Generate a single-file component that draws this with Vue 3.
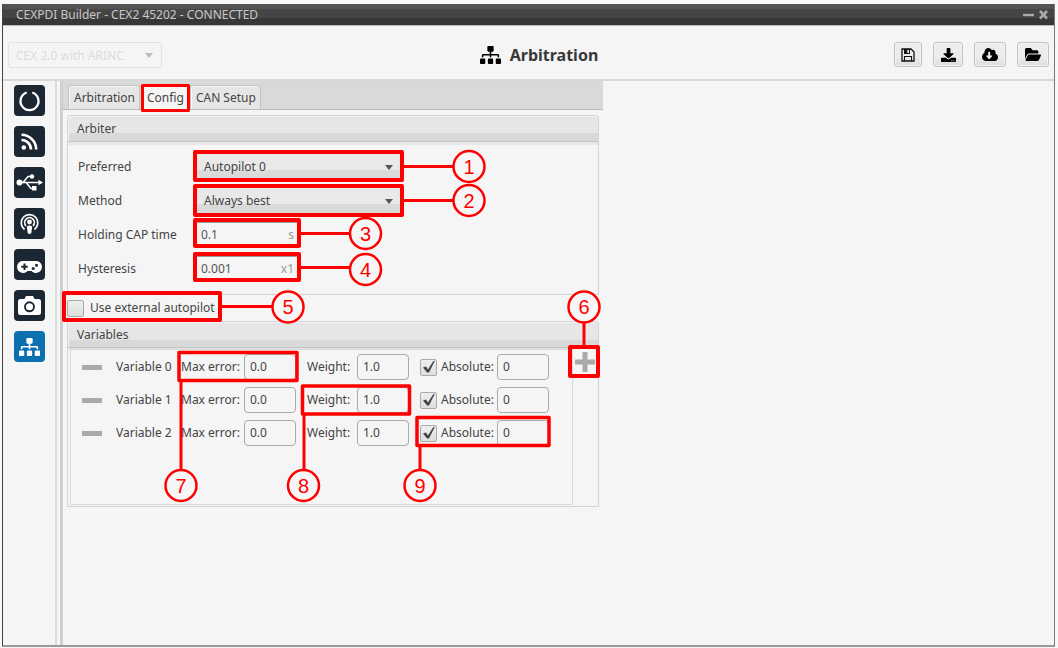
<script setup>
import { ref } from 'vue'

const sitemap =
  'M128 352H32c-17.67 0-32 14.33-32 32v96c0 17.67 14.33 32 32 32h96c17.67 0 32-14.33 32-32v-96c0-17.67-14.33-32-32-32zm-24-80h192v48h48v-48h192v48h48v-57.59c0-21.17-17.23-38.41-38.41-38.41H344v-64h40c17.67 0 32-14.33 32-32V32c0-17.67-14.33-32-32-32H256c-17.67 0-32 14.33-32 32v96c0 17.67 14.33 32 32 32h40v64H94.41C73.23 224 56 241.23 56 262.41V320h48v-48zm264 80h-96c-17.67 0-32 14.33-32 32v96c0 17.67 14.33 32 32 32h96c17.67 0 32-14.33 32-32v-96c0-17.67-14.33-32-32-32zm240 0h-96c-17.67 0-32 14.33-32 32v96c0 17.67 14.33 32 32 32h96c17.67 0 32-14.33 32-32v-96c0-17.67-14.33-32-32-32z'

const preferred = ref('Autopilot 0')
const method = ref('Always best')
const holdingTime = ref('0.1')
const hysteresis = ref('0.001')
const external = ref(false)
const variables = ref([
  { name: 'Variable 0', error: '0.0', weight: '1.0', absolute: true, value: '0' },
  { name: 'Variable 1', error: '0.0', weight: '1.0', absolute: true, value: '0' },
  { name: 'Variable 2', error: '0.0', weight: '1.0', absolute: true, value: '0' },
])

// Callouts: highlighted box, leader line and numbered circle
const boxes = [
  { x: 142.5, y: 85.5, w: 46, h: 25, s: 3 },
  { x: 195, y: 152, w: 207, h: 28, s: 4 },
  { x: 195, y: 186, w: 207, h: 29, s: 4 },
  { x: 195, y: 220, w: 104, h: 26, s: 4 },
  { x: 195, y: 254, w: 104, h: 26, s: 4 },
  { x: 64, y: 293, w: 156, h: 27, s: 4 },
  { x: 570, y: 347, w: 28, h: 29, s: 4 },
  { x: 179, y: 352.5, w: 118, h: 28, s: 3.5 },
  { x: 302.5, y: 386, w: 107, h: 28, s: 3.5 },
  { x: 417, y: 417.5, w: 132, h: 28, s: 3.5 },
]
const callouts = [
  { n: 1, x: 469, y: 166.5, line: 'M403 166.5H454' },
  { n: 2, x: 469, y: 200.5, line: 'M403 200.5H454' },
  { n: 3, x: 365.5, y: 233.5, line: 'M300 233.5H350' },
  { n: 4, x: 365.5, y: 269.5, line: 'M300 267.5H350' },
  { n: 5, x: 288, y: 307, line: 'M221 306.5H272' },
  { n: 6, x: 584, y: 307, line: 'M584 322V346' },
  { n: 7, x: 181, y: 485.5, line: 'M181 381V470' },
  { n: 8, x: 303.5, y: 485.5, line: 'M304 415V470' },
  { n: 9, x: 420, y: 485.5, line: 'M420 446V470' },
]
</script>

<template>
  <div class="desktop">
    <div class="window">
      <header class="titlebar">
        <span class="caption">CEXPDI Builder - CEX2 45202 - CONNECTED</span>
        <button class="win-btn" aria-label="Minimize">
          <svg width="11" height="13" viewBox="0 0 11 13"><path d="M0 7H11" stroke="#aaa" stroke-width="2.4" /></svg>
        </button>
        <button class="win-btn" aria-label="Close">
          <svg width="9" height="13" viewBox="0 0 9 13"><path d="M1 3L8 10.500M8 3L1 10.500" stroke="#aaa" stroke-width="2.6" /></svg>
        </button>
      </header>

      <div class="toolbar">
        <div class="select-wrap device">
          <select aria-label="Device" disabled><option>CEX 2.0 with ARINC</option></select>
          <svg class="arrow" width="8" height="5" viewBox="0 0 8 5"><path d="M0 0H8L4 5Z" /></svg>
        </div>
        <h1>
          <svg width="21" height="18" viewBox="0 0 640 512" preserveAspectRatio="none"><path :d="sitemap" /></svg>
          Arbitration
        </h1>
        <div class="actions">
          <button class="narrow" aria-label="Save">
            <svg width="14" height="14" viewBox="0 0 14 14" fill="none" stroke="#111">
              <path d="M1 1H10L13 4V13H1Z" stroke-width="1.3" />
              <path d="M3 1H9V6H3Z" fill="#111" stroke="none" /><path d="M6.300 2H8V5H6.300Z" fill="#eee" stroke="none" />
              <path d="M3.500 13V8.500H10.500V13" stroke-width="1.1" />
            </svg>
          </button>
          <button class="medium" aria-label="Download">
            <svg width="15" height="14" viewBox="0 0 512 512" preserveAspectRatio="none"><path d="M216 0h80c13.3 0 24 10.7 24 24v168h87.7c17.8 0 26.7 21.5 14.1 34.1L269.7 378.3c-7.5 7.5-19.8 7.5-27.3 0L90.1 226.1c-12.6-12.6-3.7-34.1 14.1-34.1H192V24c0-13.3 10.7-24 24-24zm296 376v112c0 13.3-10.7 24-24 24H24c-13.3 0-24-10.7-24-24V376c0-13.3 10.7-24 24-24h146.7l49 49c20.1 20.1 52.5 20.1 72.6 0l49-49H488c13.3 0 24 10.7 24 24zm-124 88c0-11-9-20-20-20s-20 9-20 20 9 20 20 20 20-9 20-20zm64 0c0-11-9-20-20-20s-20 9-20 20 9 20 20 20 20-9 20-20z" /></svg>
          </button>
          <button aria-label="Download from cloud">
            <svg width="16" height="13" viewBox="0 32 640 448" preserveAspectRatio="none"><path d="M537.6 226.6c4.1-10.7 6.4-22.4 6.4-34.6 0-53-43-96-96-96-19.7 0-38.1 6-53.3 16.2C367 64.2 315.3 32 256 32c-88.4 0-160 71.6-160 160 0 2.7.1 5.4.2 8.1C40.2 219.8 0 273.2 0 336c0 79.5 64.5 144 144 144h368c70.7 0 128-57.3 128-128 0-61.9-44-113.6-102.4-125.4zm-132.9 88.7L299.300 420.700c-6.2 6.2-16.4 6.2-22.6 0L171.300 315.300c-10.1-10.1-2.9-27.3 11.3-27.3H248V176c0-8.8 7.2-16 16-16h48c8.8 0 16 7.2 16 16v112h65.4c14.2 0 21.4 17.2 11.3 27.3z" /></svg>
          </button>
          <button aria-label="Open">
            <svg width="16" height="13" viewBox="0 64 576 384" preserveAspectRatio="none"><path d="M572.694 292.093L500.270 416.248A63.997 63.997 0 0 1 444.989 448H45.025c-18.523 0-30.064-20.093-20.731-36.093l72.424-124.155A64 64 0 0 1 152 256h399.964c18.523 0 30.064 20.093 20.730 36.093zM152 224h328v-48c0-26.510-21.490-48-48-48H272l-64-64H48C21.490 64 0 85.490 0 112v278.046l69.077-118.418C86.214 242.250 117.989 224 152 224z" /></svg>
          </button>
        </div>
      </div>

      <div class="content">
        <nav class="sidebar" aria-label="Sections">
          <button aria-label="Status">
            <svg viewBox="0 0 31 31"><path d="M12.700 7.500A9 9 0 1 0 18.300 7.500" fill="none" stroke="#fff" stroke-width="2.300" /></svg>
          </button>
          <button aria-label="Feeds">
            <svg viewBox="0 0 31 31" fill="none" stroke="#fff" stroke-width="2.600">
              <circle cx="9.800" cy="21.500" r="2.300" fill="#fff" stroke="none" />
              <path d="M7.500 14A9.500 9.500 0 0 1 17 23.500M7.500 8.800A14.700 14.700 0 0 1 22.200 23.500" />
            </svg>
          </button>
          <button aria-label="USB">
            <svg viewBox="0 0 31 31" fill="none" stroke="#fff" stroke-width="1.500">
              <path d="M4 15.500H26M9 15.500L14 9.500H17M12 15.500L17 21.500H19" />
              <circle cx="5.500" cy="15.500" r="3" fill="#fff" stroke="none" />
              <circle cx="18" cy="9.500" r="2.200" fill="#fff" stroke="none" />
              <path d="M18 19H22.500V23.500H18ZM24.500 12.700L29 15.500L24.500 18.300Z" fill="#fff" stroke="none" />
            </svg>
          </button>
          <button aria-label="Broadcast">
            <svg viewBox="0 0 31 31" fill="none" stroke="#fff" stroke-width="1.700">
              <path d="M10.500 21.500A8.300 8.300 0 1 1 20.500 21.500M12 17.800A4.800 4.800 0 1 1 19 17.800" />
              <circle cx="15.500" cy="14" r="2.400" fill="#fff" stroke="none" />
              <path d="M12.800 18.500Q15.500 16.500 18.200 18.500L17.300 25Q15.500 27 13.700 25Z" fill="#fff" stroke="none" />
            </svg>
          </button>
          <button aria-label="Gamepad">
            <svg viewBox="0 0 31 31">
              <path d="M10 12H21A6 6 0 1 1 17.500 22H13.500A6 6 0 1 1 10 12Z" fill="#fff" />
              <path d="M10.500 14.500V21M7.300 17.700H13.700" stroke="#1b2733" stroke-width="2" />
              <circle cx="19.200" cy="19.500" r="1.500" fill="#1b2733" /><circle cx="22.500" cy="16.300" r="1.500" fill="#1b2733" />
            </svg>
          </button>
          <button aria-label="Camera">
            <svg viewBox="0 0 31 31">
              <path d="M6.500 9H10.500L12 6H19L20.500 9H24.500Q27 9 27 11.500V22.500Q27 25 24.500 25H6.500Q4 25 4 22.500V11.500Q4 9 6.500 9Z" fill="#fff" />
              <circle cx="15.500" cy="16.800" r="4.500" fill="none" stroke="#1b2733" stroke-width="1.900" />
            </svg>
          </button>
          <button class="active" aria-label="Arbitration">
            <svg viewBox="0 0 31 31"><svg x="5" y="7" width="21" height="18" viewBox="0 0 640 512" preserveAspectRatio="none"><path :d="sitemap" fill="#fff" /></svg></svg>
          </button>
        </nav>
        <div class="splitter"></div>

        <main class="editor">
          <div class="tabs" role="tablist">
            <button role="tab" aria-selected="false">Arbitration</button>
            <button role="tab" class="selected" aria-selected="true">Config</button>
            <button role="tab" aria-selected="false">CAN Setup</button>
          </div>

          <div class="page">
            <section class="panel">
              <h2>Arbiter</h2>
              <div class="form">
                <label for="preferred">Preferred</label>
                <div class="select-wrap combo">
                  <select id="preferred" v-model="preferred"><option>Autopilot 0</option><option>Autopilot 1</option></select>
                  <svg class="arrow" width="8" height="5" viewBox="0 0 8 5"><path d="M0 0H8L4 5Z" /></svg>
                </div>
                <label for="method">Method</label>
                <div class="select-wrap combo">
                  <select id="method" v-model="method"><option>Always best</option><option>Fixed</option></select>
                  <svg class="arrow" width="8" height="5" viewBox="0 0 8 5"><path d="M0 0H8L4 5Z" /></svg>
                </div>
                <label for="holding">Holding CAP time</label>
                <div class="unit-field"><input id="holding" v-model="holdingTime" type="text" /><span>s</span></div>
                <label for="hysteresis">Hysteresis</label>
                <div class="unit-field"><input id="hysteresis" v-model="hysteresis" type="text" /><span>x1</span></div>
              </div>
            </section>

            <div class="external">
              <input id="external" v-model="external" type="checkbox" />
              <label for="external">Use external autopilot</label>
            </div>

            <section class="panel">
              <h2>Variables</h2>
              <div class="variables">
                <div class="list">
                  <div v-for="(v, i) in variables" :key="v.name" class="variable">
                    <button class="remove" :aria-label="'Remove ' + v.name">
                      <svg width="20" height="5" viewBox="0 0 20 5"><path d="M0 0H20V5H0Z" fill="#aaa" /></svg>
                    </button>
                    <span>{{ v.name }}</span>
                    <label :for="'error' + i">Max error:</label>
                    <input :id="'error' + i" v-model="v.error" type="text" />
                    <label :for="'weight' + i">Weight:</label>
                    <input :id="'weight' + i" v-model="v.weight" type="text" />
                    <input :id="'abs' + i" v-model="v.absolute" type="checkbox" />
                    <label :for="'abs' + i">Absolute:</label>
                    <input v-model="v.value" type="text" :aria-label="v.name + ' absolute value'" />
                  </div>
                </div>
                <button class="add" aria-label="Add variable">
                  <svg width="20" height="20" viewBox="0 0 20 20"><path d="M10 0V20M0 10H20" stroke="#aaa" stroke-width="5" /></svg>
                </button>
              </div>
            </section>
          </div>
        </main>
      </div>
    </div>

    <svg class="callouts" width="620" height="520" viewBox="0 0 620 520">
      <g fill="none" stroke="#f00" stroke-linejoin="round">
        <rect v-for="(b, i) in boxes" :key="i" :x="b.x" :y="b.y" :width="b.w" :height="b.h" :stroke-width="b.s" />
      </g>
      <g v-for="c in callouts" :key="c.n">
        <path :d="c.line" stroke="#f00" stroke-width="3" />
        <circle :cx="c.x" :cy="c.y" r="15.500" fill="#f6f6f6" stroke="#f00" stroke-width="2.500" />
        <text :x="c.x" :y="c.y + 7">{{ c.n }}</text>
      </g>
    </svg>
  </div>
</template>

<style>
body {
  margin: 0;
  background: #f8f8f8;
}
</style>

<style scoped>
.desktop {
  position: relative;
  box-sizing: border-box;
  min-height: 100vh;
  padding: 4px 3px 1px 2px;
  display: flex;
  font-family: 'Noto Sans', 'Open Sans', sans-serif;
  font-size: 12px;
  line-height: 16px;
  color: #444;
}
* {
  box-sizing: border-box;
}
button,
input,
select {
  font: inherit;
  color: inherit;
  margin: 0;
}
button {
  padding: 0;
  border: 0;
  background: none;
}
svg {
  display: block;
}
.window {
  flex: 1;
  display: flex;
  flex-direction: column;
  border: 1px solid #777;
  border-left-color: #444;
  border-top: 0;
  border-bottom: 2px solid #999;
  background: #f5f5f5;
}
.titlebar {
  display: flex;
  align-items: center;
  gap: 5px;
  height: 21px;
  padding: 0 6px 0 13px;
  background: linear-gradient(#525252 0 5px, #454545 5px 14px, #373737 14px);
  color: #c8c8c8;
}
.caption {
  flex: 1;
}
.toolbar {
  display: flex;
  align-items: center;
  height: 56px;
  padding: 4px 5px 0 5px;
  border-top: 1px solid #bbb;
  border-bottom: 2px solid #d8d8d8;
}
.select-wrap {
  position: relative;
}
.select-wrap select {
  appearance: none;
  width: 100%;
  height: 100%;
  border: 1px solid #bbb;
  border-radius: 3px;
  padding: 0 20px 0 8px;
  background: linear-gradient(#e9e9e9 0 60%, #dadada 60%);
}
.arrow {
  position: absolute;
  right: 9px;
  top: calc(50% - 2px);
  fill: #555;
  pointer-events: none;
}
.device {
  width: 154px;
  height: 26px;
}
.device select {
  border-color: #e2e2e2;
  background: #f5f5f5;
  color: #dcdcdc;
  opacity: 1;
  padding: 2px 20px 0 7px;
}
.device .arrow {
  fill: #bbb;
}
h1 {
  flex: 1;
  display: flex;
  align-items: center;
  justify-content: center;
  gap: 9px;
  margin: 0;
  padding-left: 22px;
  font-size: 16px;
  line-height: 22px;
  font-weight: 700;
  color: #383838;
}
h1 svg {
  fill: #000;
}
.actions {
  display: flex;
  gap: 11px;
}
.actions button {
  width: 32px;
  height: 25px;
  display: flex;
  align-items: center;
  justify-content: center;
  border: 1px solid #c4c4c4;
  border-radius: 3px;
  background: linear-gradient(#ececec 0 60%, #dcdcdc);
  box-shadow: inset 0 0 0 1px #f3f3f3;
}
.actions .narrow {
  width: 28px;
}
.actions .medium {
  width: 30px;
}
.content {
  flex: 1;
  display: flex;
}
.sidebar {
  display: flex;
  flex-direction: column;
  gap: 10px;
  width: 52px;
  padding: 4px 0 0 11px;
}
.sidebar button {
  width: 31px;
  height: 31px;
  border-radius: 4px;
  background: #1b2733;
}
.sidebar .active {
  background: #0a70b0;
}
.splitter {
  width: 8px;
  border: solid #dcdcdc;
  border-width: 0 3px 0 2px;
  border-right-color: #d0d0d0;
}
.editor {
  width: 540px;
}
.tabs {
  display: flex;
  align-items: flex-end;
  gap: 1px;
  height: 29px;
  padding-left: 5px;
  border-bottom: 1px solid #bbb;
  background: #d9d9d9;
}
.tabs button {
  height: 24px;
  padding: 0 4px 0 5px;
  border: 1px solid #c4c4c4;
  border-bottom: 0;
  border-radius: 3px 3px 0 0;
  background: #e6e6e6;
  box-shadow: inset 1px 1px 0 #f4f4f4;
}
.tabs .selected {
  background: #f5f5f5;
}
.page {
  padding: 5px 4px;
}
.panel {
  border: 1px solid #d4d4d4;
  border-radius: 3px 3px 0 0;
}
h2 {
  margin: 0;
  padding: 0 9px;
  font-size: 12px;
  line-height: 25px;
  font-weight: 400;
  border-bottom: 1px solid #c4c4c4;
  border-radius: 3px 3px 0 0;
  background: linear-gradient(#e6e6e6 0 70%, #d9d9d9 70%);
  box-shadow: inset 1px 1px 0 #f2f2f2;
}
.form {
  display: grid;
  grid-template-columns: 117px 207px;
  grid-auto-rows: 28px;
  gap: 6px 0;
  align-items: center;
  padding: 8px 10px 11px;
  border-top: 3px solid #e8e8e8;
}
.combo {
  height: 28px;
}
.unit-field {
  display: flex;
  align-items: center;
  width: 104px;
  height: 26px;
  padding: 0 4px 0 5px;
  border: 1px solid #999;
  border-radius: 3px;
  color: #999;
}
.unit-field input {
  flex: 1;
  min-width: 0;
  padding: 0;
  border: 0;
  background: none;
  color: #555;
}
.external {
  display: flex;
  align-items: center;
  gap: 6px;
  height: 26px;
}
.external input {
  border-color: #ccc;
}
input[type='checkbox'] {
  appearance: none;
  width: 17px;
  height: 17px;
  border: 1px solid #aaa;
  border-radius: 2px;
  background: linear-gradient(#eee, #dedede);
}
input[type='checkbox']:checked::after {
  content: '';
  display: block;
  width: 15px;
  height: 15px;
  background: #444;
  clip-path: polygon(2px 8px, 5px 7px, 7px 10px, 12px 2px, 14px 1px, 8px 13px, 6px 13px);
}
.variables {
  display: flex;
  align-items: flex-start;
  padding: 0 1px 1px 2px;
  border-top: 1px solid #e4e4e4;
}
.list {
  display: flex;
  flex-direction: column;
  gap: 7px;
  width: 503px;
  min-height: 156px;
  padding: 4px 11px;
  border: 1px solid #d8d8d8;
}
.variable {
  display: grid;
  grid-template-columns: 34px 65px 63px 63px 50px 63px 21px 56px 52px;
  align-items: center;
  height: 26px;
}
.variable input[type='text'] {
  width: 52px;
  height: 26px;
  padding: 0 5px 2px;
  border: 1px solid #aaa;
  border-radius: 4px;
  background: #f5f5f5;
}
.remove {
  width: 20px;
}
.add {
  padding: 3px 2px;
}
.callouts {
  position: absolute;
  left: 0;
  top: 0;
  pointer-events: none;
}
.callouts text {
  font-family: 'Liberation Sans', Arial, sans-serif;
  font-size: 20px;
  text-anchor: middle;
  fill: #f00;
}
</style>
